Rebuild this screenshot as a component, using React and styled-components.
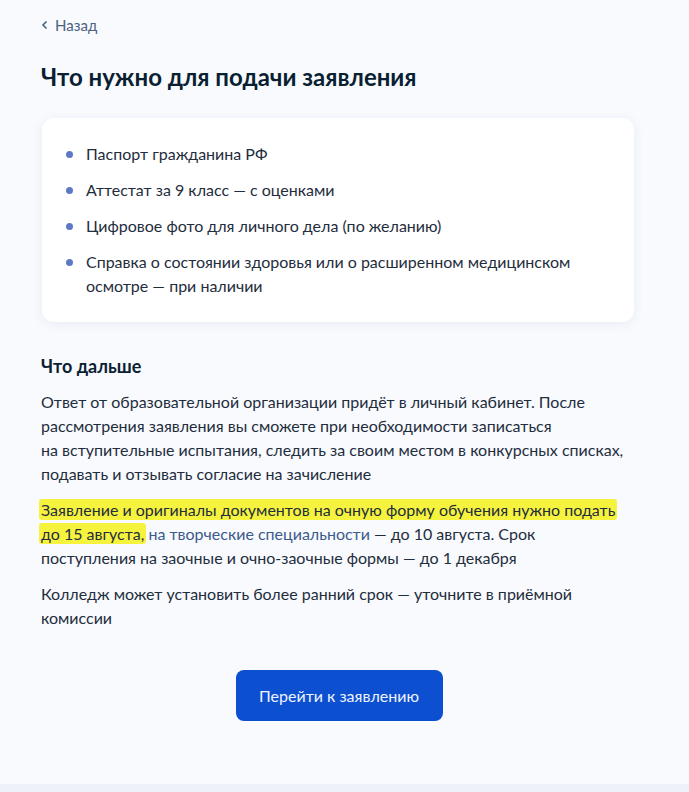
import React from 'react';
import styled, { createGlobalStyle } from 'styled-components';

const GlobalStyle = createGlobalStyle`
  html, body {
    margin: 0;
    padding: 0;
    background: #f8fafd;
  }
  body {
    font-family: Lato, "Noto Sans", "Liberation Sans", sans-serif;
    color: #0b1f33;
  }
`;

const DOCS = [
  'Паспорт гражданина РФ',
  'Аттестат за 9 класс — с оценками',
  'Цифровое фото для личного дела (по желанию)',
  'Справка о состоянии здоровья или о расширенном медицинском осмотре — при наличии',
];

const NEXT_TEXT =
  'Ответ от образовательной организации придёт в личный кабинет. После рассмотрения заявления вы сможете при необходимости записаться на\u00a0вступительные испытания, следить за своим местом в конкурсных списках, подавать и отзывать согласие на зачисление';

const App = () => {
  return (
    <>
      <GlobalStyle />
      <Page>
        <Content>
          <BackLink href="#">
            <svg width="8" height="10" viewBox="0 0 8 10">
              <path d="M5.5 1.5 L2 5 L5.5 8.5" fill="none" stroke="#4a6180" strokeWidth="1.6" />
            </svg>
            Назад
          </BackLink>
          <Title>Что нужно для подачи заявления</Title>
          <Card>
            <List>
              {DOCS.map((doc, idx) => (
                <Item key={idx}>{doc}</Item>
              ))}
            </List>
          </Card>
          <SubTitle>Что дальше</SubTitle>
          <Paragraph>{NEXT_TEXT}</Paragraph>
          <Paragraph>
            <Marker>Заявление и оригиналы документов на очную форму обучения нужно подать</Marker>{' '}
            <Marker>{'до\u00a015 августа,'}</Marker>{' '}
            <TextLink href="#">на творческие специальности</TextLink> — до 10 августа. Срок
            <br />
            поступления на заочные и очно-заочные формы — до 1 декабря
          </Paragraph>
          <Paragraph>
            Колледж может установить более ранний срок — уточните в приёмной комиссии
          </Paragraph>
          <Actions>
            <PrimaryButton>Перейти к заявлению</PrimaryButton>
          </Actions>
        </Content>
        <Footer />
      </Page>
    </>
  );
};

export default App;

const Page = styled.div`
  min-height: 792px;
  display: flex;
  flex-direction: column;
`;

const Content = styled.main`
  flex: 1;
  width: 596px;
  padding: 13px 0 0 41px;
  box-sizing: content-box;
`;

const BackLink = styled.a`
  display: inline-flex;
  align-items: center;
  gap: 6px;
  font-size: 15px;
  line-height: 24px;
  color: #4a6180;
  text-decoration: none;
`;

const Title = styled.h1`
  margin: 24px 0 0;
  font-size: 24px;
  line-height: 32px;
  font-weight: 700;
  color: #0b1f33;
`;

const Card = styled.section`
  margin: 25px 0 0 1px;
  width: 544px;
  padding: 24px;
  background: #ffffff;
  border-radius: 12px;
  box-shadow: 0 2px 12px rgba(34, 70, 130, 0.08);
`;

const List = styled.ul`
  list-style: none;
  margin: 0;
  padding: 0;
  display: flex;
  flex-direction: column;
  gap: 12px;
`;

const Item = styled.li`
  position: relative;
  padding-left: 20px;
  font-size: 16px;
  line-height: 24px;
  color: #1f2d3d;

  &::before {
    content: '';
    position: absolute;
    left: 0;
    top: 9px;
    width: 7px;
    height: 7px;
    border-radius: 50%;
    background: #5b79c4;
  }
`;

const SubTitle = styled.h2`
  margin: 32px 0 0;
  font-size: 18px;
  line-height: 24px;
  font-weight: 700;
  color: #0b1f33;
`;

const Paragraph = styled.p`
  margin: 12px 0 0;
  font-size: 16px;
  line-height: 24px;
  color: #1f2d3d;
`;

const Marker = styled.span`
  background: #f6f33e;
  padding: 1px 2px;
  margin: 0 -2px;
  border-radius: 3px;
`;

const TextLink = styled.a`
  color: #3d5a8c;
  text-decoration: none;
`;

const Actions = styled.div`
  display: flex;
  justify-content: center;
  margin-top: 40px;
`;

const PrimaryButton = styled.button`
  width: 207px;
  height: 51px;
  border: none;
  border-radius: 8px;
  background: #0d4fd1;
  color: #eef4ff;
  font-family: Lato, "Noto Sans", sans-serif;
  font-size: 16px;
  cursor: pointer;
`;

const Footer = styled.div`
  height: 8px;
  background: #eef2f8;
  margin-top: auto;
`;
